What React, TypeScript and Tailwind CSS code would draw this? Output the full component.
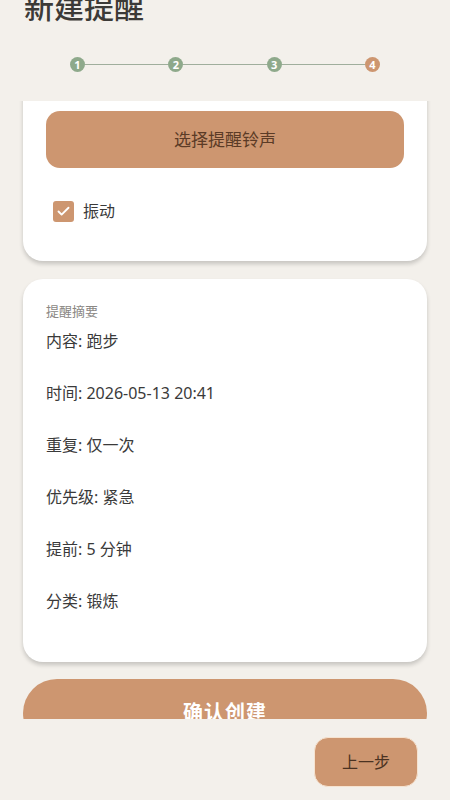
import { Check } from 'lucide-react';

const Steps = [1, 2, 3, 4];

const Summary = [
    '内容: 跑步',
    '时间: 2026-05-13 20:41',
    '重复: 仅一次',
    '优先级: 紧急',
    '提前: 5 分钟',
    '分类: 锻炼',
];

function Stepper({ Current }: { Current: number }) {

    return (

        <div className="flex items-center px-[70px] mt-[32px]">

            {Steps.map((Step, Index) => (

                <div key={Step} className={`flex items-center ${Index > 0 ? 'flex-1' : ''}`}>

                    {Index > 0 && <div className="flex-1 h-[1.5px] bg-[#9fae9c]" />}

                    <div className={`w-[15px] h-[15px] rounded-full flex items-center justify-center text-[11px] font-bold text-white leading-none ${Step === Current ? 'bg-[#cd9670]' : 'bg-[#8ea98b]'}`}>
                        {Step}
                    </div>

                </div>

            ))}

        </div>

    );

}

export default function App() {

    return (

        <div className="w-[450px] h-[800px] bg-[#f3f0eb] flex flex-col overflow-hidden text-[#3a3a3a]" style={{ fontFamily: '"Noto Sans", "Noto Sans CJK SC", sans-serif' }}>

            <div className="mt-[-11px] px-[24px] text-[30px] leading-[36px] font-medium text-[#3c3a37]">新建提醒</div>

            <Stepper Current={4} />

            {/* Scrolled content area */}

            <div className="mt-[29px] h-[618px] overflow-hidden">

                <div className="mt-[-32px] px-[23px] flex flex-col">

                    <div className="bg-white rounded-[20px] shadow-[0_3px_4px_rgba(0,0,0,0.18)] px-[23px] pt-[42px] pb-[38px]">

                        <div className="h-[57px] rounded-[14px] bg-[#cd9670] flex items-center justify-center text-[17px] text-[#5b3b26]">
                            选择提醒铃声
                        </div>

                        <div className="flex items-center gap-[9px] mt-[31px] pl-[7px]">
                            <div className="w-[21px] h-[21px] rounded-[3px] bg-[#cd9670] flex items-center justify-center">
                                <Check size={15} strokeWidth={3} className="text-white" />
                            </div>
                            <span className="text-[16px]">振动</span>
                        </div>

                    </div>

                    <div className="mt-[18px] bg-white rounded-[20px] shadow-[0_3px_4px_rgba(0,0,0,0.18)] px-[23px] pt-[22px] pb-[49px]">

                        <div className="text-[13px] text-[#8a8784] leading-[20px]">提醒摘要</div>

                        <div className="flex flex-col gap-[28px] mt-[8px]">
                            {Summary.map((Line) => (
                                <div key={Line} className="text-[16px] leading-[24px] text-[#3a3a3a]">{Line}</div>
                            ))}
                        </div>

                    </div>

                    <div className="mt-[17px] h-[68px] rounded-full bg-[#cd9670] flex items-center justify-center text-[20px] font-bold text-white tracking-[1px]">
                        确认创建
                    </div>

                </div>

            </div>

            <div className="flex justify-end pr-[32px] pt-[18px]">
                <div className="w-[104px] h-[50px] rounded-[14px] bg-[#cd9670] border-[1.5px] border-[#f6e3d0] flex items-center justify-center text-[16px] text-[#4a3222]">
                    上一步
                </div>
            </div>

        </div>

    );

}
